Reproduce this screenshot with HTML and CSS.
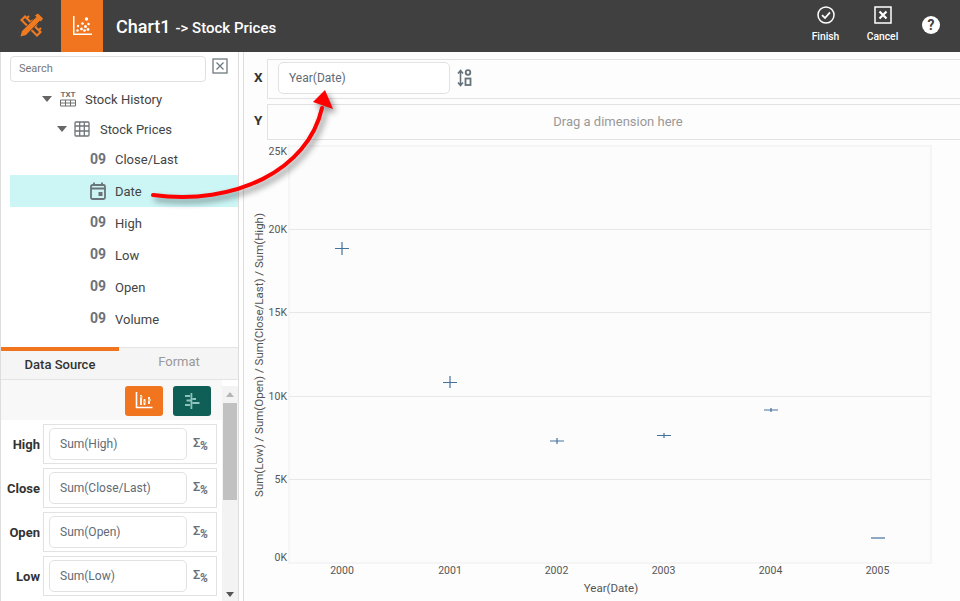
FILE: index.html
```html
<!DOCTYPE html>
<html lang="en">
<head>
  <meta charset="UTF-8" />
  <title>Chart1</title>
  <link rel="stylesheet" href="styles.css">
</head>
<body>
  <div class="app">
    <header class="topbar">
      <div class="logo-tile">
        <svg width="26" height="26" viewBox="0 0 26 26">
          <path d="M2 7 7 2 24 19 19 24Z M5 7 7 5 21 19 19 21Z" fill="#f07a20" fill-rule="evenodd"/>
          <path d="M9 5 11 3M13 9 15 7M17 13 19 11M21 17 23 15" stroke="#f07a20" stroke-width="2"/>
          <path d="M1.500 24.500 3 18 19 3 23 7 8 23Z" fill="#404040"/>
          <path d="M2.500 23.500 4 18 18.500 4 22 7.500 8 22ZM17 2.500 20 0.500 25 5.500 23 8.500Z" fill="#f07a20"/>
        </svg>
      </div>
      <div class="chart-tile">
        <svg width="20" height="20" viewBox="0 0 20 20" fill="#fff">
          <path d="M1 0h1.500v17.500H20V19H1Z"/>
          <circle cx="5.500" cy="14.500" r="1.200"/><circle cx="6" cy="10" r="1.200"/><circle cx="9.500" cy="13" r="1.400"/>
          <circle cx="10.500" cy="7.500" r="1.300"/><circle cx="13.500" cy="10.500" r="1.500"/><circle cx="14.500" cy="3" r="1.700"/><circle cx="16" cy="13.500" r="1.400"/><circle cx="12.500" cy="14.500" r="1.300"/><circle cx="16.500" cy="8" r="1.300"/>
        </svg>
      </div>
      <div class="title"><span class="title-main">Chart1</span><span class="title-sub">-&gt; Stock Prices</span></div>
      <div class="top-actions">
        <div class="top-action finish">
          <svg width="18" height="18" viewBox="0 0 18 18" fill="none" stroke="#fff" stroke-width="1.500"><circle cx="9" cy="9" r="8"/><path d="M5 9.200 8 12 13 6.300" stroke-width="1.800"/></svg>
          <span>Finish</span>
        </div>
        <div class="top-action cancel">
          <svg width="18" height="18" viewBox="0 0 18 18" fill="none" stroke="#fff"><rect x="1" y="1" width="16" height="16" stroke-width="1.500"/><path d="M5.500 5.500 12.500 12.500M12.500 5.500 5.500 12.500" stroke-width="2.200"/></svg>
          <span>Cancel</span>
        </div>
        <div class="help">?</div>
      </div>
    </header>

    <div class="content">
      <aside class="sidebar">
        <div class="search-row">
          <div class="search">Search</div>
          <svg class="search-clear" width="16" height="16" viewBox="0 0 16 16" fill="none" stroke="#6f7a80"><rect x="1" y="1" width="14" height="14" stroke-width="1.300"/><path d="M4.500 4.500 11.500 11.500M11.500 4.500 4.500 11.500" stroke-width="1.300"/></svg>
        </div>
        <ul class="tree">
          <li class="node node-ds">
            <span class="caret"></span>
            <svg width="18" height="18" viewBox="0 0 18 18" class="node-icon">
              <text x="9" y="7" text-anchor="middle" class="txt-label">TXT</text>
              <path d="M1.500 10h15v6h-15ZM1.500 13h15M6.500 10v6M11.500 10v6" fill="none" stroke="#6f6f6f" stroke-width="1"/>
            </svg>
            <span>Stock History</span>
          </li>
          <li class="node node-table">
            <span class="caret"></span>
            <svg width="16" height="16" viewBox="0 0 16 16" fill="none" stroke="#6f7478" stroke-width="1.300" class="node-icon">
              <rect x="1" y="1" width="14" height="14" rx="1"/><path d="M1 5h14M1 10h14M5.700 1v14M10.300 1v14"/>
            </svg>
            <span>Stock Prices</span>
          </li>
          <li class="node field"><b class="num">09</b><span>Close/Last</span></li>
          <li class="node field selected">
            <svg class="cal" width="16" height="18" viewBox="0 0 16 18" fill="none" stroke="#6a7478" stroke-width="1.800">
              <rect x="1" y="3" width="14" height="14" rx="1.500"/><path d="M1 6.500h14M4 .5v3M12 .5v3"/><rect x="8.500" y="10" width="4" height="4" fill="#6a7478" stroke="none"/>
            </svg>
            <span>Date</span>
          </li>
          <li class="node field"><b class="num">09</b><span>High</span></li>
          <li class="node field"><b class="num">09</b><span>Low</span></li>
          <li class="node field"><b class="num">09</b><span>Open</span></li>
          <li class="node field"><b class="num">09</b><span>Volume</span></li>
        </ul>

        <div class="tabs">
          <div class="tab active">Data Source</div>
          <div class="tab">Format</div>
        </div>

        <div class="binding-panel">
          <div class="binding-main">
            <div class="panel-tools">
              <div class="tool tool-orange">
                <svg width="18" height="18" viewBox="0 0 18 18" fill="none" stroke="#fff" stroke-width="1.600"><path d="M1.500 0v15.500h16"/><path d="M6 3v10M9.500 7v6M14 5v7" stroke-width="1.800"/><path d="M5 5h2.500M8.500 10h2.500M13 8h3" stroke="#f8c68f" stroke-width="2"/></svg>
              </div>
              <div class="tool tool-teal">
                <svg width="18" height="18" viewBox="0 0 18 18" fill="#8fc4bc"><path d="M7.500 1h1.800v16H7.500zM2 3h5v2H2zM3.500 7.500H7.500v2H3.500zM2 12h5v2H2zM9.500 6h3.500v2H9.500zM9.500 10h7v2h-7z"/></svg>
              </div>
            </div>
            <div class="binding"><label>High</label><div class="binding-box"><div class="pill">Sum(High)</div><span class="sigma">&Sigma;<i>%</i></span></div></div>
            <div class="binding"><label>Close</label><div class="binding-box"><div class="pill">Sum(Close/Last)</div><span class="sigma">&Sigma;<i>%</i></span></div></div>
            <div class="binding"><label>Open</label><div class="binding-box"><div class="pill">Sum(Open)</div><span class="sigma">&Sigma;<i>%</i></span></div></div>
            <div class="binding"><label>Low</label><div class="binding-box"><div class="pill">Sum(Low)</div><span class="sigma">&Sigma;<i>%</i></span></div></div>
          </div>
          <div class="scrollbar">
            <span class="scroll-up"></span>
            <div class="scroll-track"><div class="scroll-thumb"></div></div>
            <span class="scroll-down"></span>
          </div>
        </div>
      </aside>

      <main class="main">
        <div class="axis-row axis-x">
          <label>X</label>
          <div class="drop-box">
            <div class="pill pill-x">Year(Date)</div>
            <svg class="sort-icon" width="15" height="18" viewBox="0 0 15 18" fill="none" stroke="#66727a">
              <path d="M3.500 2v14M1 4.500 3.500 1.500 6 4.500M1 13.500 3.500 16.500 6 13.500" stroke-width="1.600"/>
              <circle cx="11" cy="3.500" r="2.300" stroke-width="1.800"/><rect x="8.500" y="9.500" width="5" height="6.500" stroke-width="1.800"/>
            </svg>
          </div>
        </div>
        <div class="axis-row axis-y">
          <label>Y</label>
          <div class="drop-box drop-empty">Drag a dimension here</div>
        </div>

        <svg class="chart" width="716" height="461" viewBox="244 140 716 461">
          <rect x="289" y="146" width="642" height="417" fill="#fcfcfc" stroke="#f5f5f5" stroke-width="2"/>
          <g stroke="#e8e8e8" stroke-width="1">
            <path d="M289 229.500H931M289 312.500H931M289 396.500H931M289 479.500H931"/>
          </g>
          <g class="tick-y" text-anchor="end">
            <text x="287" y="155">25K</text>
            <text x="287" y="233">20K</text>
            <text x="287" y="316">15K</text>
            <text x="287" y="400">10K</text>
            <text x="287" y="483">5K</text>
            <text x="287" y="561">0K</text>
          </g>
          <g class="tick-x" text-anchor="middle">
            <text x="342" y="574">2000</text>
            <text x="450" y="574">2001</text>
            <text x="556.500" y="574">2002</text>
            <text x="663.500" y="574">2003</text>
            <text x="770.500" y="574">2004</text>
            <text x="877.500" y="574">2005</text>
            <text class="axis-title" x="611" y="592">Year(Date)</text>
          </g>
          <text class="axis-title" text-anchor="middle" transform="translate(263 355) rotate(-90)">Sum(Low) / Sum(Open) / Sum(Close/Last) / Sum(High)</text>
          <g stroke="#44729b" stroke-width="1.200" fill="none">
            <path d="M335 248.500H349M342 242V255"/>
            <path d="M443 382.500H457M450 376V388"/>
            <path d="M550 441H564M557 438V444"/>
            <path d="M657 435.500H671M664 433V438"/>
            <path d="M764 410H778M771 408V412"/>
            <path d="M871 538H885"/>
          </g>
        </svg>
      </main>
    </div>

    <svg class="drag-arrow" width="960" height="601" viewBox="0 0 960 601">
      <path d="M153 195C235 206 308 170 322 108" fill="none" stroke="#f00" stroke-width="4" stroke-linecap="round"/>
      <path d="M325 90 333 109 313 102Z" fill="#f00"/>
    </svg>
  </div>
</body>
</html>
```

FILE: styles.css
```css
* {
  box-sizing: border-box;
}
html, body {
  margin: 0;
  padding: 0;
}
body {
  font-family: Roboto, "Liberation Sans", sans-serif;
  background: #fff;
  color: #444;
}
.app {
  position: relative;
  width: 960px;
  height: 601px;
  overflow: hidden;
  display: flex;
  flex-direction: column;
}

/* top bar */
.topbar {
  height: 52px;
  flex: none;
  background: #404040;
  display: flex;
  align-items: center;
  color: #fff;
}
.logo-tile {
  width: 61px;
  height: 52px;
  display: flex;
  align-items: center;
  justify-content: center;
}
.chart-tile {
  width: 42px;
  height: 52px;
  background: #f0751e;
  display: flex;
  align-items: center;
  justify-content: center;
}
.title {
  margin-left: 13px;
  display: flex;
  align-items: baseline;
  gap: 5px;
  font-weight: 500;
}
.title-main {
  font-size: 18px;
}
.title-sub {
  font-size: 15px;
}
.top-actions {
  margin-left: auto;
  display: flex;
  align-items: flex-start;
  height: 52px;
  padding-top: 6px;
}
.top-action {
  display: flex;
  flex-direction: column;
  align-items: center;
  gap: 6px;
  font-size: 10.3px;
  font-weight: 500;
  width: 57px;
}
.help {
  width: 18px;
  height: 18px;
  margin: 10px 20px 0 11px;
  border-radius: 50%;
  background: #fff;
  color: #404040;
  font-size: 14px;
  font-weight: 700;
  line-height: 18px;
  text-align: center;
}

/* left panel */
.content {
  flex: 1;
  display: flex;
  min-height: 0;
}
.sidebar {
  width: 239px;
  flex: none;
  display: flex;
  flex-direction: column;
  border-left: 1px solid #ddd;
  border-right: 1px solid #ddd;
}
.search-row {
  height: 32px;
  padding: 4px 0 0 9px;
  display: flex;
  align-items: flex-start;
}
.search {
  width: 196px;
  height: 26px;
  border: 1px solid #e0e0e0;
  border-radius: 4px;
  font-size: 11px;
  line-height: 24px;
  padding-left: 8px;
  color: #777;
}
.search-clear {
  margin: 2px 0 0 6px;
}
.tree {
  list-style: none;
  margin: 0;
  padding: 0;
  height: 263px;
  font-size: 13px;
  color: #444;
}
.node {
  display: flex;
  align-items: center;
}
.node-ds {
  height: 30px;
  padding-left: 41px;
}
.node-table {
  height: 30px;
  padding-left: 56px;
}
.caret {
  width: 0;
  height: 0;
  border-left: 5px solid transparent;
  border-right: 5px solid transparent;
  border-top: 6px solid #666;
  margin-right: 7px;
}
.node-icon {
  margin-right: 8px;
}
.node-table .node-icon {
  margin-right: 10px;
}
.txt-label {
  font-size: 8px;
  font-weight: 700;
  fill: #6f6f6f;
}
.field {
  height: 32px;
  margin-left: 9px;
  padding-left: 80px;
}
.node-table + .field {
  height: 31px;
}
.num {
  width: 25px;
  font-size: 14px;
  color: #6f7276;
  position: relative;
  top: -1px;
}
.cal {
  margin-right: 9px;
}
.selected {
  background: #ccf6f6;
}

/* tabs */
.tabs {
  display: flex;
  height: 33px;
  flex: none;
  background: #f5f5f5;
  border-top: 1px solid #e4e4e4;
  border-bottom: 1px solid #e4e4e4;
  font-size: 13px;
}
.tab {
  width: 118px;
  text-align: center;
  color: #999;
  line-height: 28px;
  padding-left: 2px;
}
.tab.active {
  border-top: 4px solid #f0751e;
  margin-top: -1px;
  color: #333;
  font-weight: 500;
  line-height: 28px;
  padding-left: 0;
}

.binding-panel {
  flex: 1;
  display: flex;
  min-height: 0;
}
.binding-main {
  width: 221px;
  flex: none;
}
.panel-tools {
  height: 40px;
  background: #f8f8f8;
  display: flex;
  justify-content: flex-end;
  gap: 10px;
  padding: 6px 11px 0 0;
}
.tool {
  width: 38px;
  height: 30px;
  border-radius: 3px;
  display: flex;
  align-items: center;
  justify-content: center;
}
.tool-orange {
  background: #f0751e;
}
.tool-teal {
  background: #0f5f57;
}
.binding {
  display: flex;
  align-items: center;
  height: 40px;
  margin: 4px 0;
}
.binding label {
  width: 39px;
  margin-right: 3px;
  text-align: right;
  font-size: 13px;
  font-weight: 700;
  color: #333;
}
.binding-box {
  width: 174px;
  height: 40px;
  border: 1px solid #e2e2e2;
  display: flex;
  align-items: center;
  padding-left: 5px;
}
.pill {
  width: 138px;
  height: 32px;
  border: 1px solid #e2e2e2;
  border-radius: 5px;
  background: #fff;
  font-size: 12px;
  line-height: 30px;
  padding-left: 10px;
  color: #5f6b75;
}
.sigma {
  margin-left: 6px;
  font-size: 13px;
  font-weight: 500;
  color: #66727a;
  position: relative;
  top: -2px;
  letter-spacing: -1px;
}
.sigma i {
  font-size: 12px;
  font-weight: 700;
  position: relative;
  top: 3px;
}
.scrollbar {
  width: 16px;
  margin-top: 6px;
  background: #f3f3f3;
  display: flex;
  flex-direction: column;
  align-items: center;
}
.scroll-up, .scroll-down {
  flex: none;
  width: 0;
  height: 0;
  border-left: 4px solid transparent;
  border-right: 4px solid transparent;
}
.scroll-up {
  margin: 6px 0;
  border-bottom: 5px solid #b5b5b5;
}
.scroll-down {
  margin: 6px 0 4px;
  border-top: 5px solid #555;
}
.scroll-track {
  flex: 1;
  width: 100%;
  padding: 0 1px;
}
.scroll-thumb {
  height: 97px;
  background: #c1c1c1;
}

/* right side */
.main {
  flex: 1;
  margin-left: 4px;
  border-left: 1px solid #ddd;
  background: #fdfdfd;
  min-width: 0;
}
.axis-row {
  display: flex;
  align-items: center;
}
.axis-row label {
  width: 23px;
  padding-left: 10px;
  font-size: 13.5px;
  font-weight: 700;
  color: #333;
  position: relative;
  top: -2px;
}
.axis-x {
  height: 40px;
  margin-top: 7px;
}
.axis-y {
  height: 36px;
  margin-top: 5px;
}
.drop-box {
  flex: 1;
  height: 100%;
  border: 1px solid #e2e2e2;
  border-right: none;
  display: flex;
  align-items: center;
  padding-left: 10px;
}
.pill-x {
  width: 172px;
  position: relative;
  top: -1px;
}
.sort-icon {
  margin-left: 7px;
  position: relative;
  top: -1px;
}
.drop-empty {
  justify-content: center;
  padding: 0 0 2px 8px;
  font-size: 13px;
  color: #999;
}
.chart {
  display: block;
}
.chart text {
  font-size: 10.5px;
  fill: #555;
}
.chart .axis-title {
  font-size: 11.5px;
}
.drag-arrow {
  position: absolute;
  left: 0;
  top: 0;
  pointer-events: none;
  filter: drop-shadow(3px 4px 3px rgba(0, 0, 0, 0.45));
}
```
